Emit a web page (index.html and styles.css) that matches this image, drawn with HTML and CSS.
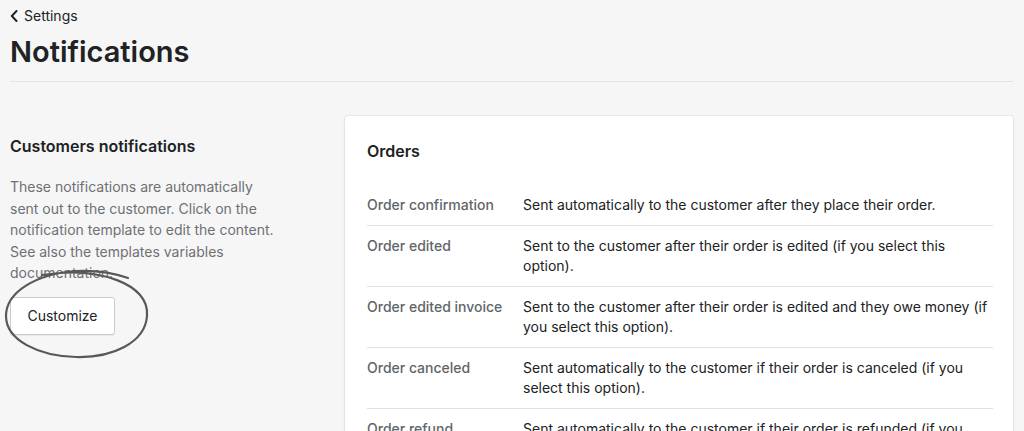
FILE: index.html
```html
<!DOCTYPE html>
<html lang="en">
<head>
<meta charset="utf-8">
<title>Notifications</title>
<link rel="stylesheet" href="styles.css">
</head>
<body>
<div class="page">
  <header class="header">
    <a class="back" href="#">
      <svg class="chev" width="8" height="12" viewBox="0 0 8 12"><path d="M6.5 1 L1.8 6 L6.5 11" fill="none" stroke="#202223" stroke-width="2" stroke-linecap="round" stroke-linejoin="round"/></svg>
      <span>Settings</span>
    </a>
    <h1 class="title">Notifications</h1>
  </header>
  <div class="layout">
    <section class="aside">
      <h2 class="aside-title">Customers notifications</h2>
      <p class="aside-text">These notifications are automatically sent out to the customer. Click on the notification template to edit the content. See also the templates variables documentation.</p>
      <div class="btn-wrap">
        <button class="btn">Customize</button>
        <svg class="circle" width="150" height="96" viewBox="0 0 150 96"><path d="M38 9 C95 0 146 18 143 50 C141 77 108 92 72 91 C34 90 2 74 2 50 C2 26 32 8 72 5 C92 4 110 7 124 12" fill="none" stroke="#585858" stroke-width="2.2" stroke-linecap="round"/></svg>
      </div>
    </section>
    <section class="card">
      <h2 class="card-title">Orders</h2>
      <div class="rows">
        <div class="row"><div class="label">Order confirmation</div><div class="desc">Sent automatically to the customer after they place their order.</div></div>
        <div class="row"><div class="label">Order edited</div><div class="desc">Sent to the customer after their order is edited (if you select this option).</div></div>
        <div class="row"><div class="label">Order edited invoice</div><div class="desc">Sent to the customer after their order is edited and they owe money (if you select this option).</div></div>
        <div class="row"><div class="label">Order canceled</div><div class="desc">Sent automatically to the customer if their order is canceled (if you select this option).</div></div>
        <div class="row"><div class="label">Order refund</div><div class="desc">Sent automatically to the customer if their order is refunded (if you select this option).</div></div>
      </div>
    </section>
  </div>
</div>
</body>
</html>
```

FILE: styles.css
```css
* { box-sizing: border-box; }
html, body { margin: 0; padding: 0; }
body {
  background: #f6f6f7;
  font-family: Inter, "Liberation Sans", Arial, sans-serif;
  color: #202223;
  overflow: hidden;
  height: 431px;
}
.page { padding: 0 11px 0 10px; }
.header { border-bottom: 1px solid #e1e3e5; padding-top: 7px; padding-bottom: 12px; }
.back {
  display: flex; align-items: center; gap: 6px;
  color: #202223; text-decoration: none;
  font-size: 14px; line-height: 18px;
}
.chev { display: block; }
.title {
  margin: 10px 0 0;
  font-size: 29px; font-weight: 600; line-height: 34px;
  letter-spacing: 0;
}
.layout {
  display: grid;
  grid-template-columns: 300px 1fr;
  column-gap: 35px;
  padding-top: 34px;
}
.aside { padding-top: 19px; }
.aside-title { margin: 0; font-size: 16px; font-weight: 600; line-height: 22px; }
.aside-text {
  margin: 19px 0 0; font-size: 14px; line-height: 21.5px; color: #6d7175;
  width: 270px;
}
.btn-wrap { position: relative; margin-top: 13px; width: 105px; }
.btn {
  display: block;
  width: 105px; height: 38px;
  background: #fff;
  border: 1px solid #c9cccf;
  border-radius: 3px;
  box-shadow: 0 1px 0 rgba(0,0,0,.05);
  font-family: inherit; font-size: 14px; color: #202223;
}
.circle { position: absolute; left: -6px; top: -31px; pointer-events: none; }
.card {
  background: #fff;
  border-radius: 3px;
  box-shadow: 0 0 0 1px rgba(63,63,68,.05), 0 1px 3px rgba(63,63,68,.12);
  padding: 24px 20px 0 22px;
  min-height: 400px;
}
.card-title { margin: 0; font-size: 16px; font-weight: 600; line-height: 22px; }
.rows { margin-top: 23px; }
.row {
  display: grid; grid-template-columns: 156px 1fr;
  padding: 10px 0;
  border-bottom: 1px solid #e1e3e5;
  font-size: 14px; line-height: 20px;
}
.label { color: #616569; font-weight: 500; }
.desc { color: #202223; }
```
